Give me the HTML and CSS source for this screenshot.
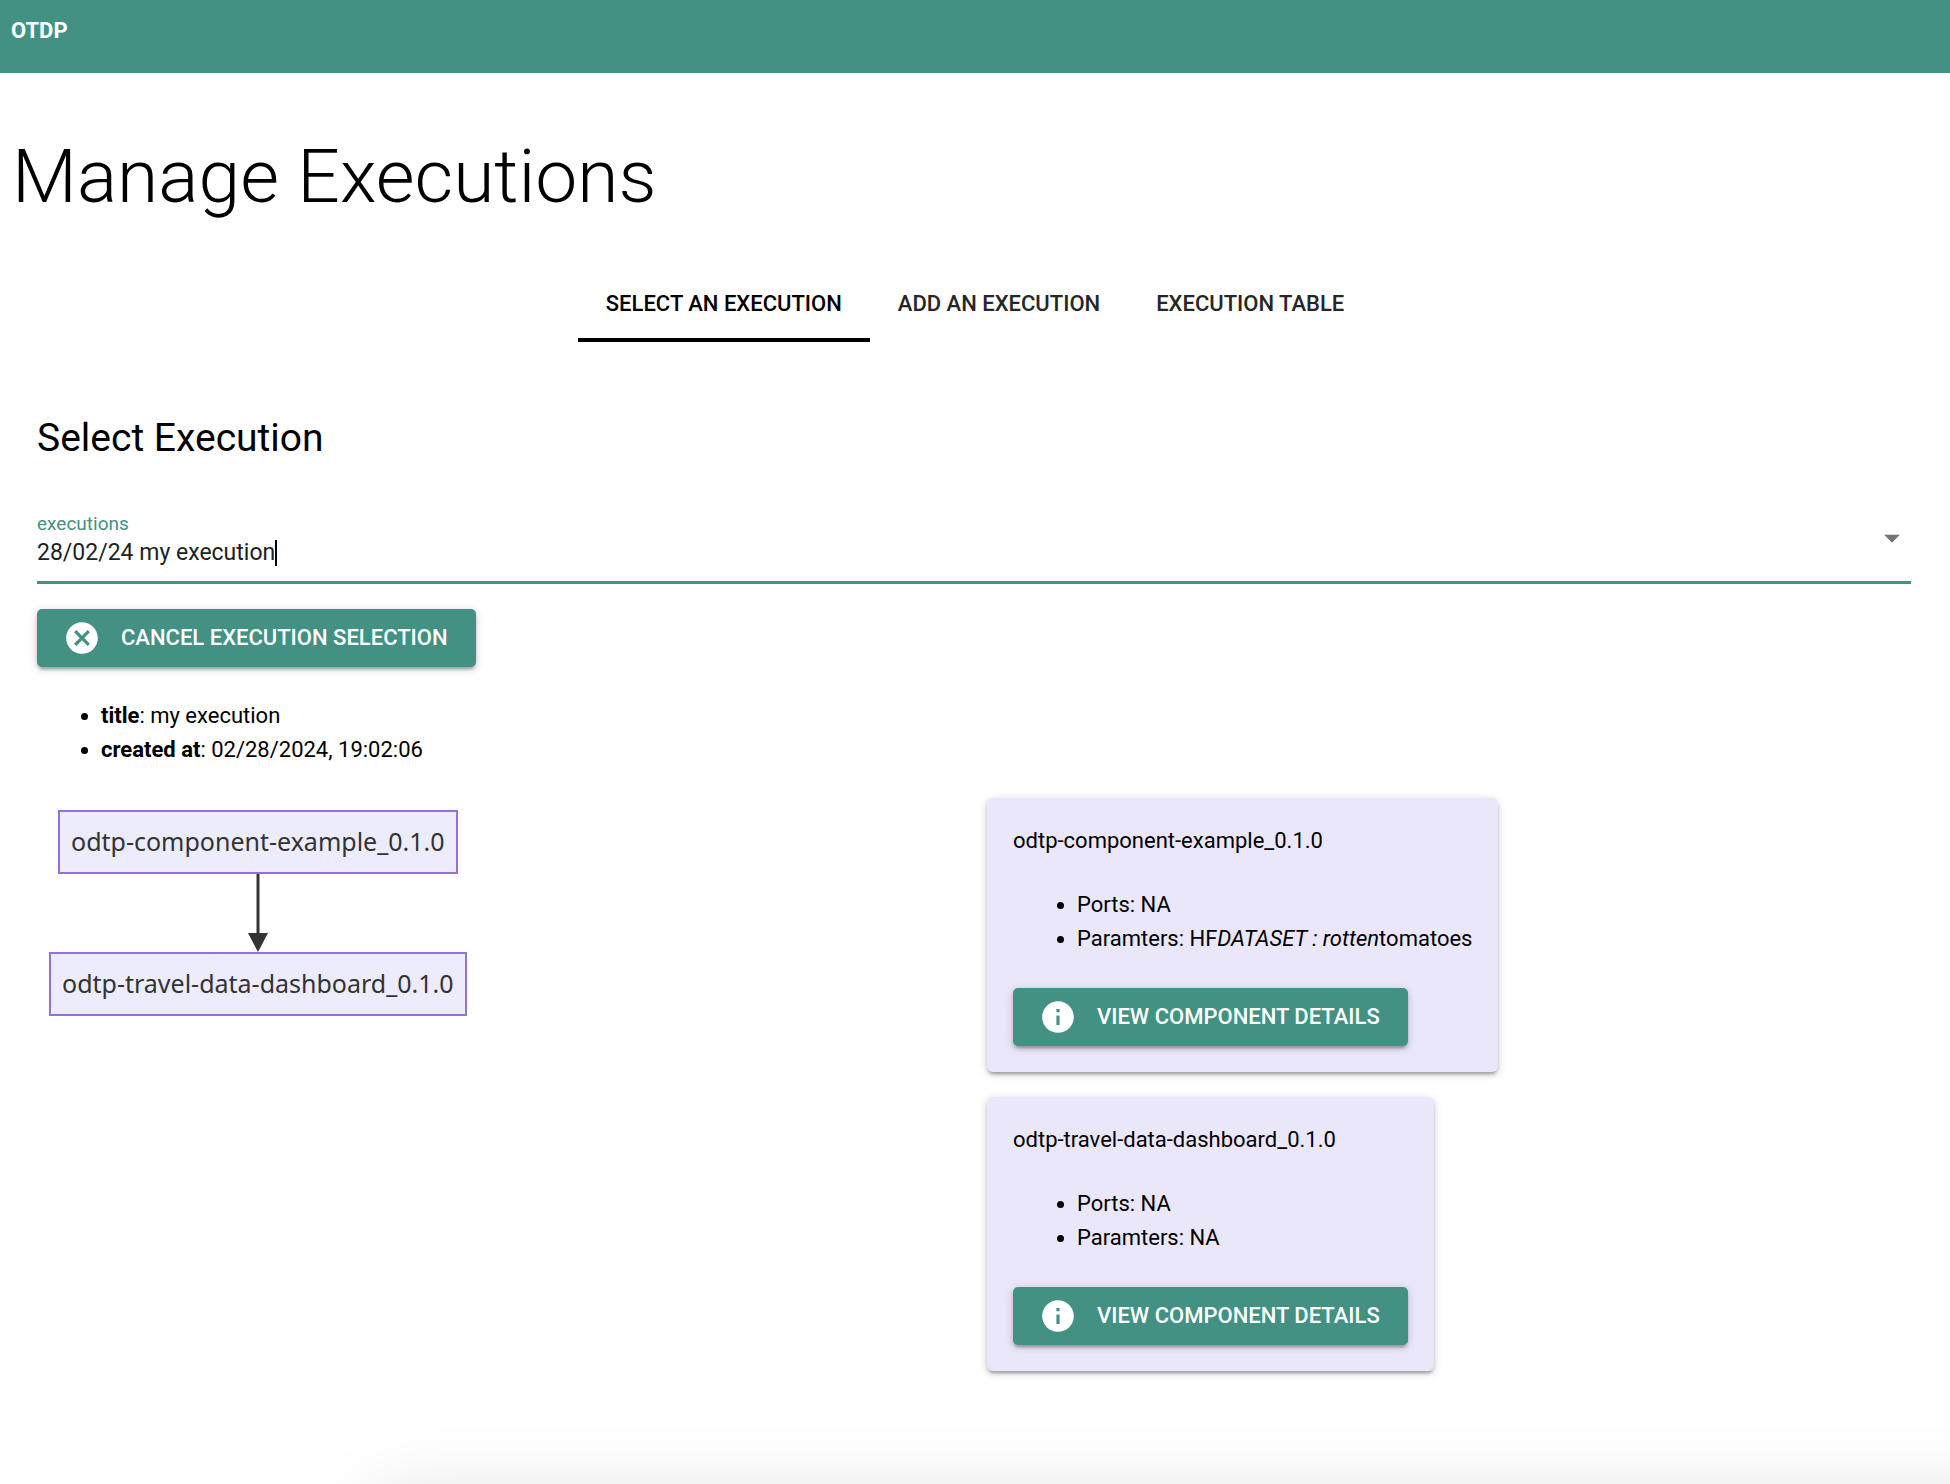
FILE: index.html
```html
<!DOCTYPE html>
<html lang="en">
<head>
<meta charset="utf-8">
<title>OTDP</title>
<link rel="stylesheet" href="styles.css">
</head>
<body>
<header class="topbar"><a class="brand" href="#">OTDP</a></header>
<main class="page">
  <h1 class="page-title">Manage Executions</h1>
  <div class="tabs" role="tablist">
    <button class="tab tab-active" role="tab" aria-selected="true">Select an execution</button>
    <button class="tab" role="tab" aria-selected="false">Add an execution</button>
    <button class="tab" role="tab" aria-selected="false">Execution table</button>
  </div>
  <section class="panel">
    <h2 class="panel-title">Select Execution</h2>
    <div class="field">
      <div class="field-body">
        <label class="field-label" for="executions">executions</label>
        <div class="field-value">
          <input class="field-input" id="executions" type="text" role="combobox" aria-expanded="false" value="28/02/24 my execution">
          <span class="caret"></span>
        </div>
      </div>
      <svg class="field-arrow" viewBox="0 0 24 24" aria-hidden="true"><path d="M7 10l5 5 5-5z"/></svg>
    </div>
    <button class="btn">
      <svg class="btn-icon" viewBox="0 0 24 24" aria-hidden="true"><path d="M12 2C6.47 2 2 6.47 2 12s4.47 10 10 10 10-4.47 10-10S17.53 2 12 2zm5 13.59L15.59 17 12 13.41 8.41 17 7 15.59 10.59 12 7 8.41 8.41 7 12 10.59 15.59 7 17 8.41 13.41 12 17 15.59z"/></svg>
      Cancel execution selection
    </button>
    <ul class="list summary">
      <li><strong>title</strong>: my execution</li>
      <li><strong>created at</strong>: 02/28/2024, 19:02:06</li>
    </ul>
    <div class="columns">
      <div class="diagram">
        <div class="node">odtp-component-example_0.1.0</div>
        <svg class="edge" viewBox="0 0 20 78" aria-hidden="true"><path d="M8.5 0h3v60h-3z"/><path d="M0 59h20L10 78z"/></svg>
        <div class="node">odtp-travel-data-dashboard_0.1.0</div>
      </div>
      <div class="cards">
        <article class="card">
          <div>odtp-component-example_0.1.0</div>
          <ul class="list card-list">
            <li>Ports: NA</li>
            <li>Paramters: HF<em>DATASET : rotten</em>tomatoes</li>
          </ul>
          <button class="btn">
            <svg class="btn-icon" viewBox="0 0 24 24" aria-hidden="true"><path d="M12 2C6.48 2 2 6.48 2 12s4.48 10 10 10 10-4.48 10-10S17.52 2 12 2zm1 15h-2v-6h2v6zm0-8h-2V7h2v2z"/></svg>
            View component details
          </button>
        </article>
        <article class="card">
          <div>odtp-travel-data-dashboard_0.1.0</div>
          <ul class="list card-list">
            <li>Ports: NA</li>
            <li>Paramters: NA</li>
          </ul>
          <button class="btn">
            <svg class="btn-icon" viewBox="0 0 24 24" aria-hidden="true"><path d="M12 2C6.48 2 2 6.48 2 12s4.48 10 10 10 10-4.48 10-10S17.52 2 12 2zm1 15h-2v-6h2v6zm0-8h-2V7h2v2z"/></svg>
            View component details
          </button>
        </article>
      </div>
    </div>
  </section>
</main>
<div class="bottom-shade"></div>
</body>
</html>
```
FILE: styles.css
```css
:root {
  --green: #429183;
}
* { box-sizing: border-box; }
body {
  margin: 0;
  background: #fff;
  color: #000;
  font: 22px/34px Roboto, "Liberation Sans", sans-serif;
}
button, input { font: inherit; }
.topbar {
  height: 73px;
  padding: 14px 11px;
  background: var(--green);
}
.brand {
  color: #fff;
  font-weight: 700;
  text-decoration: none;
}
.page { padding: 54px 12px 40px; }
.page-title {
  margin: 0;
  font-size: 75px;
  line-height: 98px;
  font-weight: 300;
}
.tabs {
  display: flex;
  justify-content: center;
  margin-top: 40px;
}
.tab {
  height: 77px;
  padding: 4px 28px 0;
  border: 0;
  border-bottom: 4px solid transparent;
  background: none;
  color: #262626;
  font-weight: 500;
  text-transform: uppercase;
}
.tab-active {
  color: #000;
  border-bottom-color: #000;
}
.panel { padding: 70px 27px 0 25px; }
.panel-title {
  margin: 0;
  font-size: 39px;
  line-height: 52px;
  font-weight: 400;
}
.field {
  display: flex;
  align-items: center;
  justify-content: space-between;
  height: 90px;
  margin: 30px 0 25px;
  border-bottom: 3px solid var(--green);
}
.field-body { padding-top: 7px; }
.field-label {
  display: block;
  color: var(--green);
  font-size: 19px;
  line-height: 24px;
}
.field-value {
  display: flex;
  align-items: center;
}
.field-input {
  field-sizing: content;
  padding: 0;
  border: 0;
  outline: 0;
  background: none;
  color: #212121;
  font-size: 23px;
}
.caret {
  width: 2px;
  height: 26px;
  background: #000;
}
.field-arrow {
  width: 38px;
  height: 38px;
  fill: #757575;
}
.btn {
  display: flex;
  align-items: center;
  gap: 20px;
  width: max-content;
  height: 58px;
  padding: 0 28px 0 26px;
  border: 0;
  border-radius: 5px;
  background: var(--green);
  box-shadow: 0 2px 8px rgba(0, 0, 0, .2), 0 3px 3px rgba(0, 0, 0, .14), 0 5px 2px -3px rgba(0, 0, 0, .12);
  color: #fff;
  font-weight: 500;
  text-transform: uppercase;
}
.btn-icon {
  width: 38px;
  height: 38px;
  fill: currentColor;
}
.list {
  margin: 0;
  padding-left: 64px;
}
.summary { margin-top: 32px; }
.columns {
  display: grid;
  grid-template-columns: 1fr 1fr;
  gap: 26px;
  margin-top: 31px;
}
.diagram {
  display: flex;
  flex-direction: column;
  align-items: center;
  justify-self: start;
  padding: 12px;
}
.node {
  height: 64px;
  padding: 0 11px;
  border: 2px solid #9370db;
  background: #ececfc;
  color: #333;
  font: 25px/58px "Noto Sans", sans-serif;
}
.edge {
  width: 20px;
  height: 78px;
  fill: #333;
}
.cards {
  display: flex;
  flex-direction: column;
  align-items: flex-start;
  gap: 25px;
}
.card {
  padding: 26px;
  border-radius: 6px;
  background: #ebe7fb;
  box-shadow: 0 2px 8px rgba(0, 0, 0, .2), 0 3px 3px rgba(0, 0, 0, .14), 0 5px 2px -3px rgba(0, 0, 0, .12);
}
.card-list { margin: 30px 0 32px; }
/* soft shade along the lower edge of the window */
.bottom-shade {
  position: fixed;
  left: 380px;
  right: -100px;
  bottom: -100px;
  height: 80px;
  box-shadow: 0 0 80px rgba(0, 0, 0, .17);
  pointer-events: none;
}
```
